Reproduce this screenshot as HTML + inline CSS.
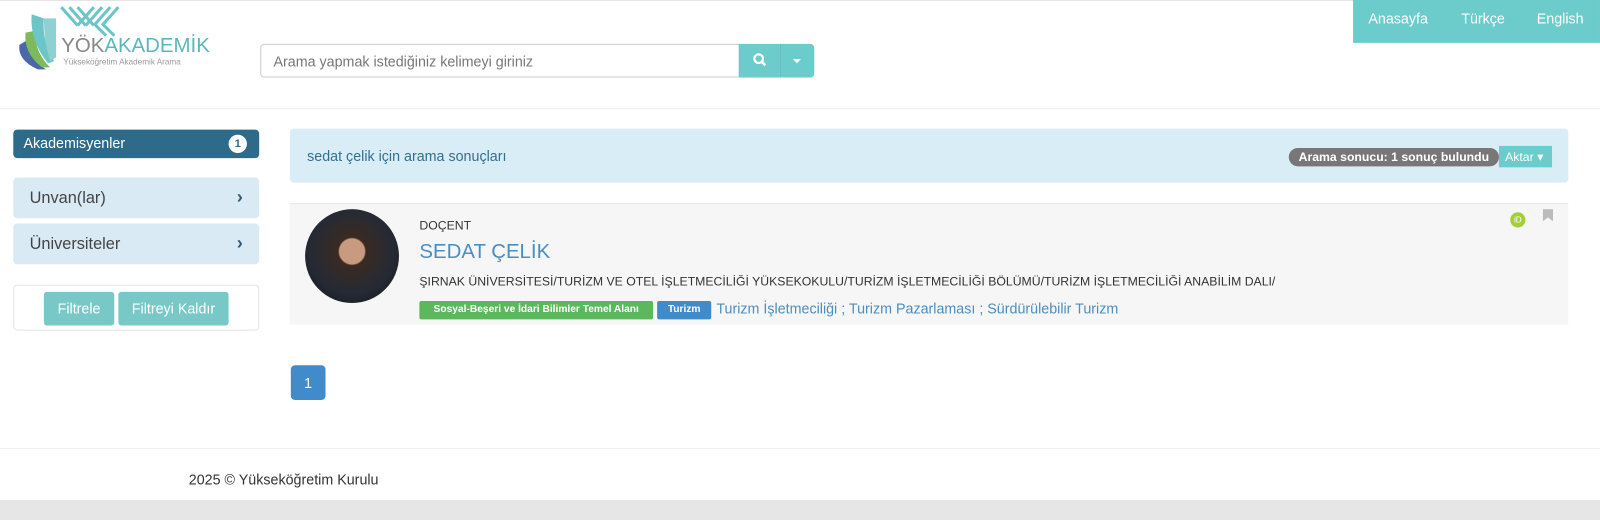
<!DOCTYPE html>
<html><head><meta charset="utf-8"><style>
*{box-sizing:border-box;margin:0;padding:0}
body{width:1600px;height:516px;background:#fff;font-family:"Liberation Sans",Arial,sans-serif;position:relative;overflow:hidden;color:#333}
#w{position:absolute;left:0;top:0;width:1568px;height:506px;transform:scale(1.0204);transform-origin:0 0}
.abs{position:absolute}
</style></head><body><div id="w">
<div class="abs" style="left:0;top:0;width:1568px;height:1px;background:#e5e5e5"></div>
<!-- logo -->
<svg class="abs" style="left:15px;top:4px" width="60" height="66" viewBox="0 0 60 66">
<path d="M4 40 Q2 55 22 64 L30 64 Q12 52 14 34 Z" fill="#4a67a8"/>
<path d="M10 28 Q8 48 26 62 L34 62 Q18 46 20 26 Z" fill="#7dba5a"/>
<path d="M16 10 Q14 36 32 58 L38 56 Q26 36 28 14 Z" fill="#6cc5c8"/>
<path d="M24 14 L40 14 L40 52 L34 56 Q28 36 28 14Z" fill="#8fd0d3"/>
</svg>
<svg class="abs" style="left:58px;top:5px" width="64" height="32" viewBox="0 0 64 32">
<g stroke="#6cc5c8" stroke-width="3" fill="none"><path d="M2 2 L18 20 M10 2 L26 20 M18 2 L34 20 M34 2 L18 20 M42 2 L26 20 M50 2 L34 20 M58 2 L42 20 M36 20 L46 30 M44 20 L54 30"/></g>
</svg>
<div class="abs" style="left:60px;top:34px;font-size:20px;color:#888"><span>YÖK</span><span style="color:#5ab8bb">AKADEMİK</span></div>
<div class="abs" style="left:62px;top:56px;font-size:8px;color:#999">Yükseköğretim Akademik Arama</div>
<!-- search -->
<div class="abs" style="left:255px;top:43px;width:470px;height:33px;border:1px solid #ccc;border-radius:4px 0 0 4px;font-size:14px;color:#777;padding:8px 12px">Arama yapmak istediğiniz kelimeyi giriniz</div>
<div class="abs" style="left:724px;top:43px;width:40px;height:33px;background:#6ccbcb"></div>
<svg class="abs" style="left:737px;top:51px" width="16" height="16" viewBox="0 0 16 16"><circle cx="6.5" cy="6.5" r="4.2" stroke="#fff" stroke-width="2.2" fill="none"/><path d="M9.5 9.5 L13 13" stroke="#fff" stroke-width="2.6"/></svg>
<div class="abs" style="left:764px;top:43px;width:34px;height:33px;background:#6ccbcb;border-left:1px solid #5ab5b5;border-radius:0 4px 4px 0"></div>
<div class="abs" style="left:777px;top:58px;border:4px solid transparent;border-top-color:#fff;border-bottom:0"></div>
<!-- top nav -->
<div class="abs" style="left:1326px;top:0;width:242px;height:42px;background:#6ccbcb;color:#fff;font-size:14px">
<span class="abs" style="left:15px;top:10px">Anasayfa</span><span class="abs" style="left:106px;top:10px">Türkçe</span><span class="abs" style="left:180px;top:10px">English</span></div>
<div class="abs" style="left:0;top:106px;width:1568px;height:1px;background:#f0f0f0"></div>
<!-- sidebar -->
<div class="abs" style="left:13px;top:127px;width:241px;height:28px;background:#2e6a8a;border-radius:4px;color:#fff;font-size:14px;padding:5px 10px">Akademisyenler
<span class="abs" style="right:12px;top:5px;width:18px;height:18px;border-radius:9px;background:#fff;color:#2e6a8a;font-size:11px;font-weight:bold;text-align:center;line-height:18px">1</span></div>
<div class="abs" style="left:13px;top:174px;width:241px;height:40px;background:#daeaf5;border-radius:4px;font-size:16px;color:#444;padding:12px 16px">Unvan(lar)<span class="abs" style="right:16px;top:9px;font-weight:bold;color:#2e5a7a;font-size:18px">&#x203A;</span></div>
<div class="abs" style="left:13px;top:219px;width:241px;height:40px;background:#daeaf5;border-radius:4px;font-size:16px;color:#444;padding:12px 16px">Üniversiteler<span class="abs" style="right:16px;top:9px;font-weight:bold;color:#2e5a7a;font-size:18px">&#x203A;</span></div>
<div class="abs" style="left:13px;top:279px;width:241px;height:45px;border:1px solid #e3e3e3;border-radius:4px"></div>
<div class="abs" style="left:43px;top:286px;width:69px;height:33px;background:#78c8c8;border-radius:3px;color:#fff;font-size:14px;text-align:center;line-height:33px">Filtrele</div>
<div class="abs" style="left:116px;top:286px;width:108px;height:33px;background:#78c8c8;border-radius:3px;color:#fff;font-size:14px;text-align:center;line-height:33px">Filtreyi Kaldır</div>
<!-- results header -->
<div class="abs" style="left:284px;top:126px;width:1253px;height:53px;background:#d9edf7;border-radius:4px;font-size:14px;color:#31708f;padding:19px 17px">sedat çelik için arama sonuçları</div>
<div class="abs" style="left:1263px;top:145px;width:206px;height:18px;background:#777;border-radius:9px;color:#fff;font-size:12px;font-weight:bold;text-align:center;line-height:18px">Arama sonucu: 1 sonuç bulundu</div>
<div class="abs" style="left:1469px;top:143px;width:52px;height:21px;background:#6ccbcb;color:#fff;font-size:12px;padding:4px 6px">Aktar ▾</div>
<!-- result card -->
<div class="abs" style="left:284px;top:199px;width:1253px;height:119px;background:#f6f6f6;border-top:1px solid #e8e8e8"></div>
<div class="abs" style="left:299px;top:205px;width:92px;height:92px;border-radius:50%;background:radial-gradient(circle at 50% 45%,#c89a80 0 18%,#3a2a22 20%,#252a35 60%,#111 100%)"></div>
<div class="abs" style="left:411px;top:214px;font-size:12px;color:#333">DOÇENT</div>
<div class="abs" style="left:411px;top:236px;font-size:20px;color:#4a8fc0">SEDAT ÇELİK</div>
<div class="abs" style="left:411px;top:269px;font-size:12px;color:#333">ŞIRNAK ÜNİVERSİTESİ/TURİZM VE OTEL İŞLETMECİLİĞİ YÜKSEKOKULU/TURİZM İŞLETMECİLİĞİ BÖLÜMÜ/TURİZM İŞLETMECİLİĞİ ANABİLİM DALI/</div>
<div class="abs" style="left:411px;top:295px;width:229px;height:18px;background:#5cb85c;color:#fff;font-size:10px;font-weight:bold;text-align:center;line-height:18px;border-radius:2px">Sosyal-Beşeri ve İdari Bilimler Temel Alanı</div>
<div class="abs" style="left:644px;top:295px;width:53px;height:18px;background:#428bca;color:#fff;font-size:10px;font-weight:bold;text-align:center;line-height:18px;border-radius:2px">Turizm</div>
<div class="abs" style="left:702px;top:294px;font-size:14px;color:#4a8fc0">Turizm İşletmeciliği ; Turizm Pazarlaması ; Sürdürülebilir Turizm</div>
<div class="abs" style="left:1480px;top:208px;width:15px;height:15px;border-radius:50%;background:#a6ce39;color:#fff;font-size:8px;text-align:center;line-height:15px">iD</div>
<svg class="abs" style="left:1512px;top:205px" width="10" height="12"><path d="M0 0H10V12L5 8L0 12Z" fill="#bbb"/></svg>
<!-- pagination -->
<div class="abs" style="left:285px;top:358px;width:34px;height:34px;background:#428bca;border-radius:4px;color:#fff;font-size:14px;text-align:center;line-height:34px">1</div>
<!-- footer -->
<div class="abs" style="left:0;top:439px;width:1568px;height:1px;background:#f0f0f0"></div>
<div class="abs" style="left:185px;top:462px;font-size:14px;color:#333">2025 © Yükseköğretim Kurulu</div>
<div class="abs" style="left:0;top:490px;width:1568px;height:20px;background:#e6e6e6"></div>
</div></body></html>
